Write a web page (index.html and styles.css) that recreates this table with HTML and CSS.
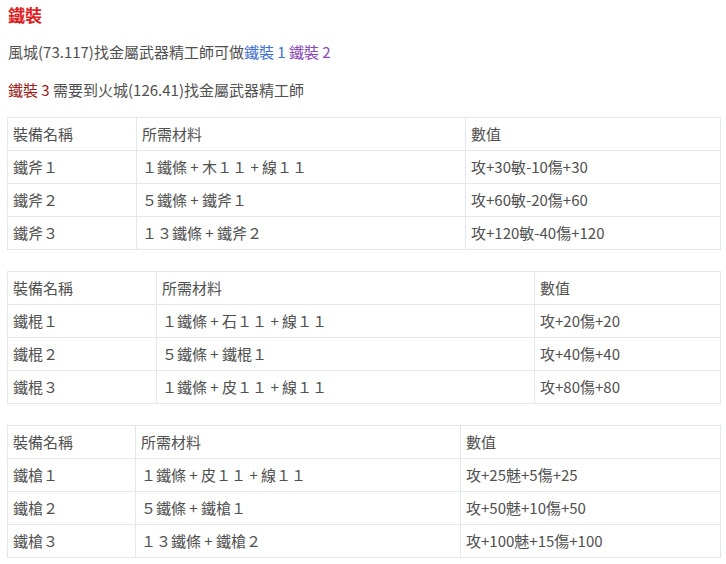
FILE: index.html
```html
<!DOCTYPE html>
<html lang="zh-Hant">
<head>
<meta charset="utf-8">
<link rel="stylesheet" href="styles.css">
</head>
<body>
<div class="page">
  <div class="title">鐵裝</div>
  <p class="line l1">風城(73.117)找金屬武器精工師可做<span class="blue">鐵裝 1</span> <span class="purple">鐵裝 2</span></p>
  <p class="line l2"><span class="darkred">鐵裝 3</span> 需要到火城(126.41)找金屬武器精工師</p>

  <table class="eq">
    <colgroup><col class="a1"><col class="b1"><col></colgroup>
    <tr><td>裝備名稱</td><td>所需材料</td><td>數值</td></tr>
    <tr><td>鐵斧１</td><td>１鐵條 + 木１１ + 線１１</td><td>攻+30敏-10傷+30</td></tr>
    <tr><td>鐵斧２</td><td>５鐵條 + 鐵斧１</td><td>攻+60敏-20傷+60</td></tr>
    <tr><td>鐵斧３</td><td>１３鐵條 + 鐵斧２</td><td>攻+120敏-40傷+120</td></tr>
  </table>

  <table class="eq">
    <colgroup><col class="a2"><col class="b2"><col></colgroup>
    <tr><td>裝備名稱</td><td>所需材料</td><td>數值</td></tr>
    <tr><td>鐵棍１</td><td>１鐵條 + 石１１ + 線１１</td><td>攻+20傷+20</td></tr>
    <tr><td>鐵棍２</td><td>５鐵條 + 鐵棍１</td><td>攻+40傷+40</td></tr>
    <tr><td>鐵棍３</td><td>１鐵條 + 皮１１ + 線１１</td><td>攻+80傷+80</td></tr>
  </table>

  <table class="eq">
    <colgroup><col class="a3"><col class="b3"><col></colgroup>
    <tr><td>裝備名稱</td><td>所需材料</td><td>數值</td></tr>
    <tr><td>鐵槍１</td><td>１鐵條 + 皮１１ + 線１１</td><td>攻+25魅+5傷+25</td></tr>
    <tr><td>鐵槍２</td><td>５鐵條 + 鐵槍１</td><td>攻+50魅+10傷+50</td></tr>
    <tr><td>鐵槍３</td><td>１３鐵條 + 鐵槍２</td><td>攻+100魅+15傷+100</td></tr>
  </table>
</div>
</body>
</html>
```
FILE: styles.css
```css
html, body {
  margin: 0;
  padding: 0;
  background: #ffffff;
}
body {
  font-family: "Noto Sans CJK TC", "Noto Sans", sans-serif;
  color: #505050;
  font-size: 15px;
}
.page {
  padding: 0 5px 0 7px;
}
.title {
  color: #e0201e;
  font-weight: bold;
  font-size: 17px;
  line-height: 30px;
  padding-left: 1px;
}
.line {
  margin: 0;
  line-height: 24px;
  padding-left: 1px;
}
.l1 { margin-top: 10px; }
.l2 { margin-top: 14px; }
.blue { color: #3d6fd6; }
.purple { color: #8a45b8; }
.darkred { color: #9b1b1b; }

.eq {
  width: 714px;
  border-collapse: collapse;
  table-layout: fixed;
  margin-top: 15px;
  border: 1px solid #dcdfe3;
  border-right-color: #c9cbce;
}
.eq + .eq { margin-top: 21px; }
.eq td {
  height: 32px;
  padding: 0 5px;
  border: 1px solid #e3e8ee;
  line-height: 20px;
  vertical-align: middle;
  white-space: nowrap;
}
.a1 { width: 129px; }
.b1 { width: 329px; }
.a2 { width: 149px; }
.b2 { width: 378px; }
.a3 { width: 128px; }
.b3 { width: 325px; }
```
